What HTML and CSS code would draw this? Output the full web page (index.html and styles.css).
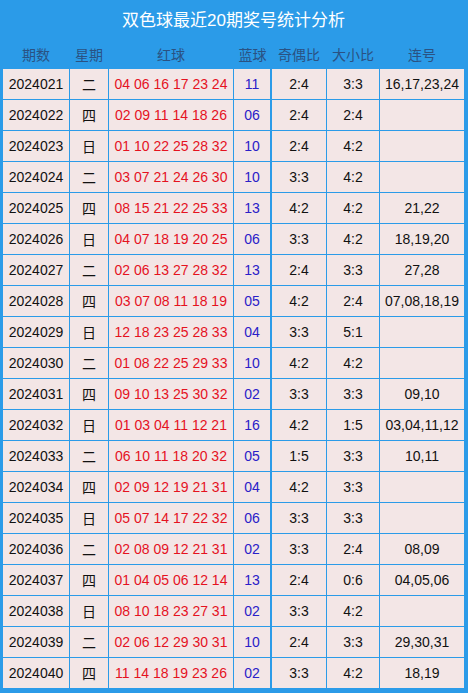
FILE: index.html
```html
<!DOCTYPE html>
<html lang="zh">
<head>
<meta charset="utf-8">
<link rel="stylesheet" href="styles.css">
</head>
<body>
<div class="panel">
  <div class="title">双色球最近20期奖号统计分析</div>
  <table class="stats">
    <thead>
      <tr><th>期数</th><th>星期</th><th>红球</th><th class="blue-col">蓝球</th><th>奇偶比</th><th>大小比</th><th>连号</th></tr>
    </thead>
    <tbody>
      <tr><td>2024021</td><td>二</td><td class="red">04 06 16 17 23 24</td><td class="blue blue-col">11</td><td>2:4</td><td>3:3</td><td>16,17,23,24</td></tr>
      <tr><td>2024022</td><td>四</td><td class="red">02 09 11 14 18 26</td><td class="blue blue-col">06</td><td>2:4</td><td>2:4</td><td></td></tr>
      <tr><td>2024023</td><td>日</td><td class="red">01 10 22 25 28 32</td><td class="blue blue-col">10</td><td>2:4</td><td>4:2</td><td></td></tr>
      <tr><td>2024024</td><td>二</td><td class="red">03 07 21 24 26 30</td><td class="blue blue-col">10</td><td>3:3</td><td>4:2</td><td></td></tr>
      <tr><td>2024025</td><td>四</td><td class="red">08 15 21 22 25 33</td><td class="blue blue-col">13</td><td>4:2</td><td>4:2</td><td>21,22</td></tr>
      <tr><td>2024026</td><td>日</td><td class="red">04 07 18 19 20 25</td><td class="blue blue-col">06</td><td>3:3</td><td>4:2</td><td>18,19,20</td></tr>
      <tr><td>2024027</td><td>二</td><td class="red">02 06 13 27 28 32</td><td class="blue blue-col">13</td><td>2:4</td><td>3:3</td><td>27,28</td></tr>
      <tr><td>2024028</td><td>四</td><td class="red">03 07 08 11 18 19</td><td class="blue blue-col">05</td><td>4:2</td><td>2:4</td><td>07,08,18,19</td></tr>
      <tr><td>2024029</td><td>日</td><td class="red">12 18 23 25 28 33</td><td class="blue blue-col">04</td><td>3:3</td><td>5:1</td><td></td></tr>
      <tr><td>2024030</td><td>二</td><td class="red">01 08 22 25 29 33</td><td class="blue blue-col">10</td><td>4:2</td><td>4:2</td><td></td></tr>
      <tr><td>2024031</td><td>四</td><td class="red">09 10 13 25 30 32</td><td class="blue blue-col">02</td><td>3:3</td><td>3:3</td><td>09,10</td></tr>
      <tr><td>2024032</td><td>日</td><td class="red">01 03 04 11 12 21</td><td class="blue blue-col">16</td><td>4:2</td><td>1:5</td><td>03,04,11,12</td></tr>
      <tr><td>2024033</td><td>二</td><td class="red">06 10 11 18 20 32</td><td class="blue blue-col">05</td><td>1:5</td><td>3:3</td><td>10,11</td></tr>
      <tr><td>2024034</td><td>四</td><td class="red">02 09 12 19 21 31</td><td class="blue blue-col">04</td><td>4:2</td><td>3:3</td><td></td></tr>
      <tr><td>2024035</td><td>日</td><td class="red">05 07 14 17 22 32</td><td class="blue blue-col">06</td><td>3:3</td><td>3:3</td><td></td></tr>
      <tr><td>2024036</td><td>二</td><td class="red">02 08 09 12 21 31</td><td class="blue blue-col">02</td><td>3:3</td><td>2:4</td><td>08,09</td></tr>
      <tr><td>2024037</td><td>四</td><td class="red">01 04 05 06 12 14</td><td class="blue blue-col">13</td><td>2:4</td><td>0:6</td><td>04,05,06</td></tr>
      <tr><td>2024038</td><td>日</td><td class="red">08 10 18 23 27 31</td><td class="blue blue-col">02</td><td>3:3</td><td>4:2</td><td></td></tr>
      <tr><td>2024039</td><td>二</td><td class="red">02 06 12 29 30 31</td><td class="blue blue-col">10</td><td>2:4</td><td>3:3</td><td>29,30,31</td></tr>
      <tr><td>2024040</td><td>四</td><td class="red">11 14 18 19 23 26</td><td class="blue blue-col">02</td><td>3:3</td><td>4:2</td><td>18,19</td></tr>
    </tbody>
  </table>
</div>
</body>
</html>
```

FILE: styles.css
```css
html, body {
  margin: 0;
  padding: 0;
  background: #2b9be8;
}
.panel {
  width: 468px;
  height: 693px;
  background: #2b9be8;
  padding: 0 3px 0 2px;
  box-sizing: border-box;
  font-family: "Liberation Sans", Arial, "Noto Sans CJK SC", sans-serif;
}
.title {
  height: 40px;
  line-height: 42px;
  text-align: center;
  color: #ffffff;
  font-size: 17px;
  font-family: "Liberation Sans", "Noto Sans CJK SC", sans-serif;
}
.stats {
  border-collapse: separate;
  border-spacing: 1px;
  table-layout: fixed;
  width: 463px;
  margin-top: -1px;
}
.stats th {
  height: 28px;
  padding: 0;
  font-weight: normal;
  font-size: 14px;
  color: #2a5283;
  background: transparent;
  text-align: center;
  vertical-align: middle;
  font-family: "Liberation Sans", "Noto Sans CJK SC", sans-serif;
}
.stats td {
  height: 30px;
  padding: 0;
  background: #f3e6e6;
  color: #111111;
  font-size: 14px;
  text-align: center;
  vertical-align: middle;
  white-space: nowrap;
  font-family: "Liberation Sans", "Noto Sans CJK SC", sans-serif;
}
.stats th:nth-child(1) { width: 66px; }
.stats th:nth-child(2) { width: 38px; }
.stats th:nth-child(3) { width: 124px; }
.stats th:nth-child(4) { width: 37px; }
.stats th:nth-child(5) { width: 54px; }
.stats th:nth-child(6) { width: 52px; }
.stats th:nth-child(7) { width: 84px; }
.stats td.blue-col {
  border-right: 1px solid #2b9be8;
}
.stats td.red {
  color: #e5121f;
}
.stats td.blue {
  color: #2a20c8;
}
```
